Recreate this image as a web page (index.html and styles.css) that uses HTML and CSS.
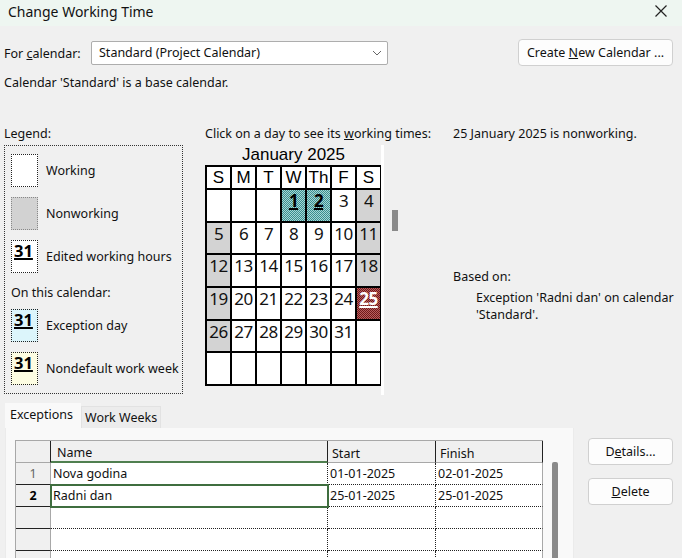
FILE: index.html
```html
<!DOCTYPE html>
<html>
<head>
<meta charset="utf-8">
<title>Change Working Time</title>
<link rel="stylesheet" href="styles.css">
</head>
<body>
<div class="window">
  <header class="titlebar">
    <span class="title">Change Working Time</span>
    <svg class="close" width="14" height="14" viewBox="0 0 14 14"><path d="M1.5 1.5 L12.5 12.5 M12.5 1.5 L1.5 12.5" stroke="#222" stroke-width="1.2" fill="none"/></svg>
  </header>
  <div class="content">
    <div class="cal-row">
      <span class="lbl">For <u>c</u>alendar:</span>
      <div class="select">
        <span>Standard (Project Calendar)</span>
        <svg class="chev" width="10" height="6" viewBox="0 0 10 6"><path d="M1 1 L5 5 L9 1" stroke="#666" stroke-width="1" fill="none"/></svg>
      </div>
      <button class="btn create">Create <u>N</u>ew Calendar ...</button>
    </div>
    <p class="note">Calendar 'Standard' is a base calendar.</p>

    <div class="main">
      <section class="legend">
        <div class="cap">Legend:</div>
        <div class="legend-box">
          <div class="item"><span class="sw working"></span><span>Working</span></div>
          <div class="item"><span class="sw nonworking"></span><span>Nonworking</span></div>
          <div class="item"><span class="sw edited"><b>31</b></span><span>Edited working hours</span></div>
          <div class="sub">On this calendar:</div>
          <div class="item first"><span class="sw exception"><b>31</b></span><span>Exception day</span></div>
          <div class="item"><span class="sw nondefault"><b>31</b></span><span>Nondefault work week</span></div>
        </div>
      </section>

      <section class="calcol">
        <div class="cap">Click on a day to see its <u>w</u>orking times:</div>
        <div class="cal-wrap">
          <div class="month">
            <div class="month-title">January 2025</div>
            <div class="grid">
              <div class="h">S</div><div class="h">M</div><div class="h">T</div><div class="h">W</div><div class="h">Th</div><div class="h">F</div><div class="h">S</div>
              <div class="d"></div><div class="d"></div><div class="d"></div><div class="d ex"><u>1</u></div><div class="d ex"><u>2</u></div><div class="d">3</div><div class="d nw">4</div>
              <div class="d nw">5</div><div class="d">6</div><div class="d">7</div><div class="d">8</div><div class="d">9</div><div class="d">10</div><div class="d nw">11</div>
              <div class="d nw">12</div><div class="d">13</div><div class="d">14</div><div class="d">15</div><div class="d">16</div><div class="d">17</div><div class="d nw">18</div>
              <div class="d nw">19</div><div class="d">20</div><div class="d">21</div><div class="d">22</div><div class="d">23</div><div class="d">24</div><div class="d sel"><u>25</u></div>
              <div class="d nw">26</div><div class="d">27</div><div class="d">28</div><div class="d">29</div><div class="d">30</div><div class="d">31</div><div class="d"></div>
              <div class="d"></div><div class="d"></div><div class="d"></div><div class="d"></div><div class="d"></div><div class="d"></div><div class="d"></div>
            </div>
          </div>
          <div class="strip"></div>
          <div class="thumb"></div>
        </div>
      </section>

      <section class="info">
        <div class="cap">25 January 2025 is nonworking.</div>
        <div class="based">Based on:</div>
        <div class="based-text">Exception 'Radni dan' on calendar<br>'Standard'.</div>
      </section>
    </div>

    <div class="bottom">
      <div class="tabs-area">
        <div class="tabs">
          <div class="tab active">Exceptions</div>
          <div class="tab">Work Weeks</div>
        </div>
        <div class="panel">
          <table class="exc">
            <colgroup><col class="w-rh"><col class="w-name"><col class="w-start"><col class="w-finish"></colgroup>
            <thead>
              <tr><th class="corner"></th><th class="name">Name</th><th>Start</th><th class="last">Finish</th></tr>
            </thead>
            <tbody>
              <tr><td class="rh">1</td><td class="c">Nova godina</td><td class="c">01-01-2025</td><td class="c last">02-01-2025</td></tr>
              <tr><td class="rh cur">2</td><td class="c active-cell">Radni dan</td><td class="c">25-01-2025</td><td class="c last">25-01-2025</td></tr>
              <tr><td class="rh"></td><td class="c"></td><td class="c"></td><td class="c last"></td></tr>
              <tr><td class="rh"></td><td class="c"></td><td class="c"></td><td class="c last"></td></tr>
              <tr><td class="rh"></td><td class="c"></td><td class="c"></td><td class="c last"></td></tr>
            </tbody>
          </table>
          <div class="vthumb"></div>
        </div>
      </div>
      <div class="side-buttons">
        <button class="btn side">D<u>e</u>tails...</button>
        <button class="btn side"><u>D</u>elete</button>
      </div>
    </div>
  </div>
</div>
</body>
</html>
```

FILE: styles.css
```css
html, body {
  margin: 0;
  padding: 0;
}
body {
  width: 682px;
  height: 558px;
  overflow: hidden;
  background: #f0f0f0;
  font-family: "Noto Sans", "DejaVu Sans", sans-serif;
  font-size: 12.5px;
  color: #111;
}
.window {
  width: 682px;
  height: 558px;
  overflow: hidden;
}
.titlebar {
  height: 26px;
  background: #eef6f1;
  display: flex;
  align-items: center;
  justify-content: space-between;
  padding: 0 14px 0 8px;
  box-sizing: border-box;
}
.title {
  font-size: 14px;
  line-height: 18px;
  margin-top: -3px;
  color: #111;
}
.close {
  display: block;
  margin-top: -4px;
}
.content {
  padding-left: 4px;
}
.cal-row {
  display: flex;
  align-items: center;
  margin-top: 13px;
  height: 27px;
  padding-right: 9px;
}
.lbl {
  width: 87px;
  line-height: 16px;
  padding-top: 2px;
}
.select {
  height: 22px;
  border: 1px solid #adadad;
  background: #fff;
  border-radius: 2px;
  display: flex;
  align-items: center;
  justify-content: space-between;
  padding: 0 5px 0 7px;
  box-sizing: content-box;
  width: 283px;
  line-height: 16px;
}
.chev { display: block; }
.btn {
  font-family: inherit;
  font-size: 12.5px;
  line-height: 16px;
  color: #111;
  background: #fdfdfd;
  border: 1px solid #d0d0d0;
  border-radius: 4px;
  padding: 0;
}
.create {
  margin-left: auto;
  width: 155px;
  height: 27px;
}
.note {
  margin: 9px 0 0 0;
  line-height: 16px;
}
.main {
  display: flex;
  margin-top: 35px;
}
.cap {
  line-height: 16px;
}
.legend {
  width: 179px;
}
.legend-box {
  margin-top: 3px;
  border: 1px dotted #333;
  padding: 8px 0 0 6px;
  box-sizing: border-box;
  height: 249px;
}
.item {
  display: flex;
  align-items: center;
  gap: 8px;
  margin-bottom: 10px;
  line-height: 16px;
}
.item span:last-child {
  margin-top: 1px;
}
.sw {
  width: 25px;
  height: 31px;
  border: 1px dotted #222;
  display: block;
  flex: none;
}
.sw b {
  display: block;
  font-size: 16.5px;
  line-height: 1;
  font-weight: 700;
  text-decoration: underline;
  text-decoration-thickness: 2px;
  text-underline-offset: 1px;
  padding: 2px 0 0 2px;
  color: #000;
}
.working, .edited { background: #fff; }
.nonworking { background: #d2d2d2; border-color: #888; }
.exception { background: #dcf5fb; }
.nondefault { background: #fdfde2; }
.sub {
  line-height: 16px;
  margin-top: 12px;
  margin-bottom: 8px;
}
.calcol {
  margin-left: 22px;
  width: 248px;
}
.cal-wrap {
  display: flex;
  margin-top: 3px;
}
.month-title {
  font-family: "Liberation Sans", Arial, sans-serif;
  font-size: 17px;
  line-height: 20px;
  text-align: center;
  color: #000;
}
.grid {
  display: grid;
  grid-template-columns: repeat(7, 23px);
  grid-template-rows: 21px repeat(6, 30.67px);
  gap: 2px;
  padding: 2px;
  background: #000;
  width: max-content;
}
.h {
  background: #fff;
  font-family: "Liberation Sans", Arial, sans-serif;
  font-size: 17px;
  line-height: 21px;
  text-align: center;
  color: #000;
}
.d {
  background: #fff;
  font-size: 17px;
  line-height: 22px;
  text-align: center;
  color: #111;
  letter-spacing: -0.5px;
  white-space: nowrap;
}
.d.nw { background: #d3d3d3; }
.d u {
  font-weight: 700;
  text-decoration-thickness: 2px;
  text-underline-offset: 1px;
}
.d.ex {
  background: repeating-conic-gradient(#3a8e8e 0 25%, #a6d6d6 0 50%) 0 0 / 2px 2px;
  color: #000;
}
.d.sel {
  background: repeating-conic-gradient(#6e1a1a 0 25%, #b85e5e 0 50%) 0 0 / 2px 2px;
  color: #fff;
}
.strip {
  width: 3px;
  height: 250px;
  background: #fff;
  margin-left: -1px;
}
.thumb {
  width: 6px;
  height: 21px;
  background: #8a8a8a;
  margin-left: 8px;
  margin-top: 65px;
}
.based {
  margin-top: 127px;
  line-height: 16px;
}
.based-text {
  margin-top: 4px;
  padding-left: 23px;
  line-height: 17px;
}
.bottom {
  display: flex;
  margin-top: 8px;
}
.tabs-area {
  margin-left: 1px;
  width: 569px;
}
.tabs {
  display: flex;
  align-items: flex-end;
  height: 25px;
}
.tab {
  height: 22px;
  line-height: 21px;
  padding: 0 3px;
  background: #ececec;
  border: 1px solid #e2e2e2;
  border-bottom: none;
  box-sizing: border-box;
  white-space: nowrap;
}
.tab.active {
  height: 25px;
  line-height: 22px;
  background: #f9f9f9;
  width: 76px;
  border-color: #f9f9f9;
  padding-left: 4px;
}
.panel {
  background: #f9f9f9;
  border: 1px solid #ebebeb;
  border-top: none;
  padding: 12px 0 0 9px;
  height: 140px;
  display: flex;
}
.exc {
  border-collapse: separate;
  border-spacing: 0;
  table-layout: fixed;
  width: 527px;
  background: #fff;
  border-top: 1px solid #a8a8a8;
  border-left: 1px solid #a8a8a8;
  align-self: flex-start;
}
.w-rh { width: 35px; }
.w-name { width: 277px; }
.w-start { width: 108px; }
.w-finish { width: 107px; }
.exc th {
  height: 21px;
  background: #f0f0f0;
  font-weight: 400;
  text-align: left;
  vertical-align: bottom;
  padding: 0 0 0 4px;
  line-height: 16px;
  border-right: 1px solid #222;
  border-bottom: 1px solid #a8a8a8;
}
.exc th.name {
  border-bottom: 2px solid #4f7f4f;
  padding-left: 6px;
  height: 20px;
}
.exc th.corner { padding: 0; }
.exc td {
  height: 21px;
  padding: 0 0 0 2px;
  line-height: 16px;
  white-space: nowrap;
}
.exc td.rh {
  background: #f0f0f0;
  text-align: center;
  color: #666;
  padding: 0;
  border-bottom: 1px solid #222;
  border-right: 1px solid #a8a8a8;
}
.exc td.rh.cur {
  color: #000;
  font-weight: 700;
}
.exc td.c {
  border-bottom: 1px dotted #222;
  border-right: 1px dotted #222;
}
.exc td.c.last {
  border-right: 1px solid #a8a8a8;
}
.exc td.active-cell {
  outline: 2px solid #3f6e3f;
  outline-offset: -1px;
}
.vthumb {
  width: 6px;
  height: 120px;
  background: #8a8a8a;
  border-radius: 2px;
  margin-left: 9px;
  margin-top: 22px;
}
.side-buttons {
  display: flex;
  flex-direction: column;
  gap: 13px;
  margin-left: 14px;
  margin-top: 35px;
}
.btn.side {
  width: 85px;
  height: 27px;
}
```
